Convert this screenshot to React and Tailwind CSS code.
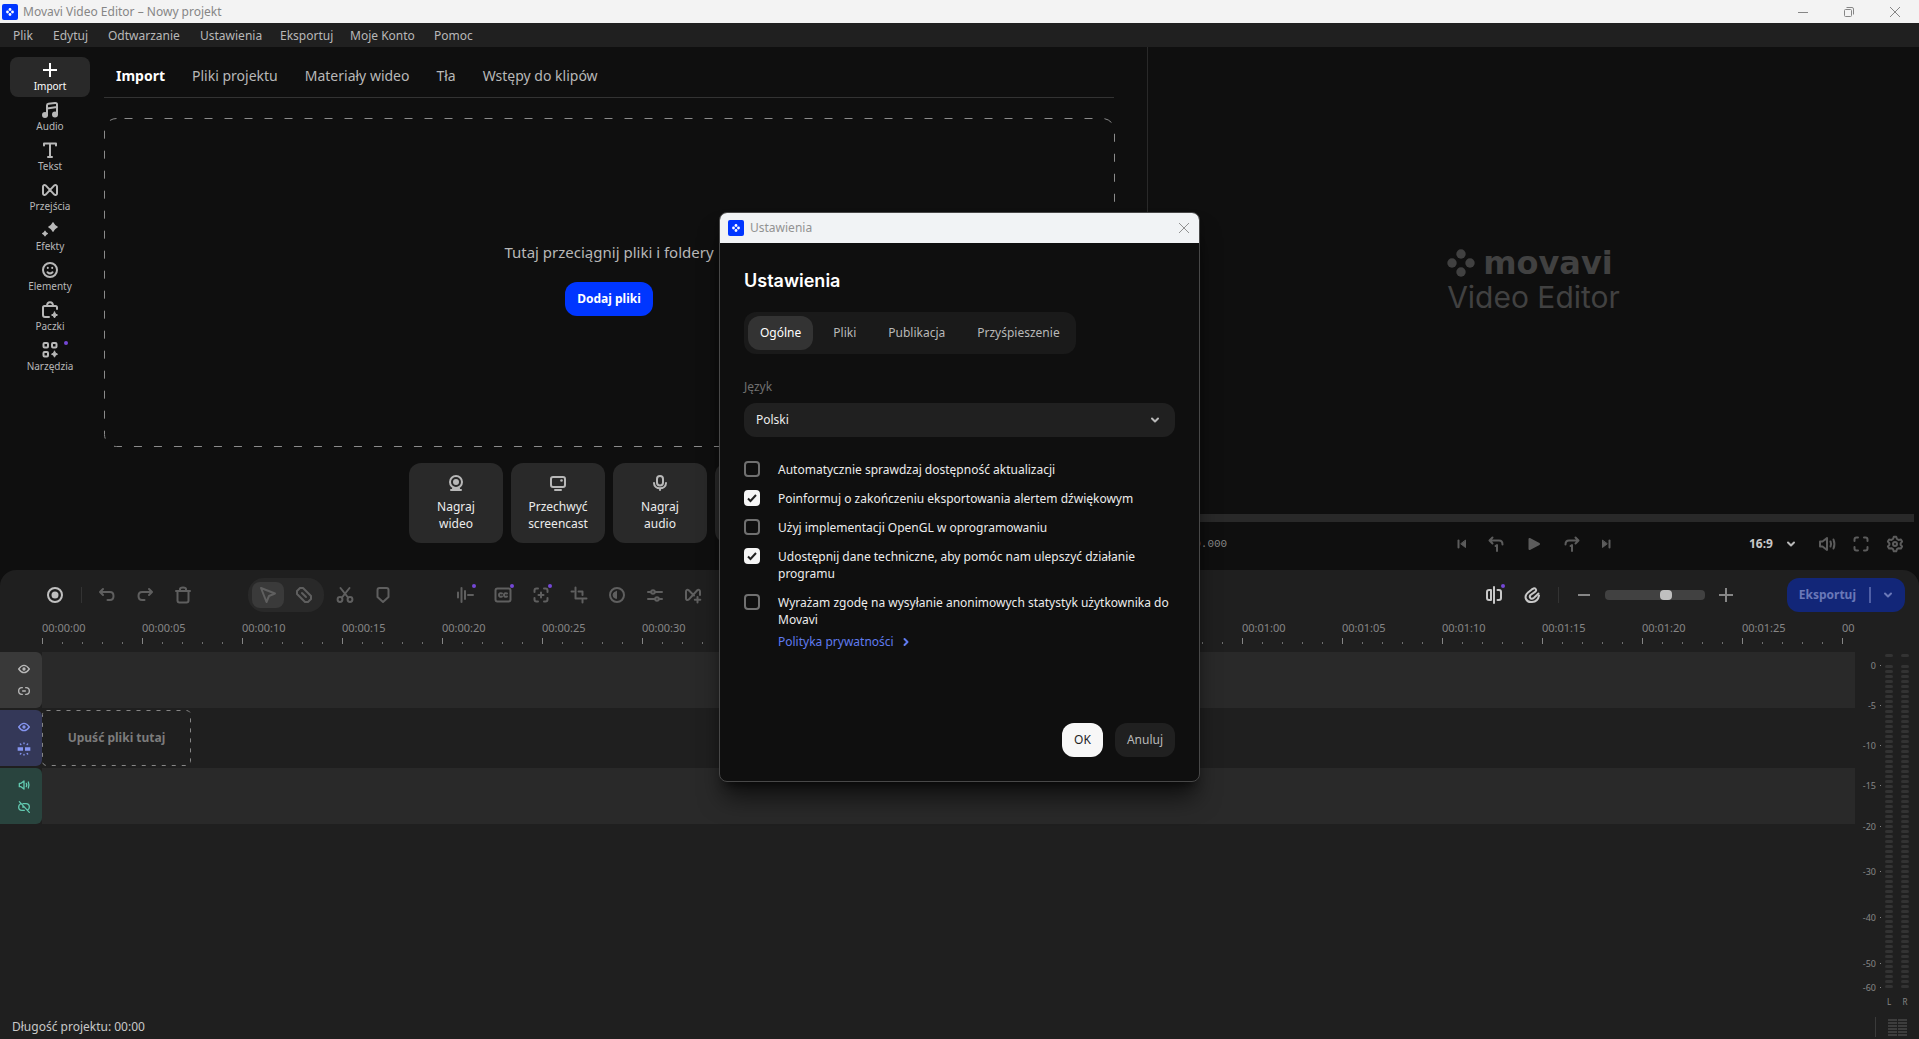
import { useState } from 'react';

const Icon = ({ children, className = 'size-6' }) => (
    <svg
        viewBox="0 0 24 24"
        fill="none"
        stroke="currentColor"
        strokeWidth="2"
        strokeLinecap="round"
        strokeLinejoin="round"
        aria-hidden="true"
        className={`shrink-0 ${className}`}
    >
        {children}
    </svg>
);

const icons = {
    plus: <path d="M12 5v14M5 12h14" strokeLinecap="butt" />,
    audio: (
        <>
            <path d="M9 17V7.5Q9 6 10.500 5.800L17 5q2-.2 2 1.600V16M9 10.500l10-1.600" />
            <circle cx="7" cy="17" r="2" fill="currentColor" />
            <circle cx="17" cy="16.500" r="2" fill="currentColor" />
        </>
    ),
    text: <path d="M6 7.500V5.500h12v2M12 6v13M10 19h4" />,
    transition: <path d="M5 8.500v7c0 1.400 1.600 2 2.700 1.100L16.300 7.400C17.400 6.500 19 7.100 19 8.500v7c0 1.400-1.600 2-2.700 1.100L7.700 7.400C6.600 6.500 5 7.100 5 8.500z" />,
    effects: (
        <g fill="currentColor" stroke="none">
            <path d="M14.500 4.500q.5-1 1 0 1.300 2.700 4 4 1 .5 0 1-2.700 1.300-4 4-.5 1-1 0-1.300-2.700-4-4-1-.5 0-1 2.700-1.300 4-4z" />
            <path d="M6.600 12.800q.4-.8.8 0 .7 1.600 2.300 2.300.8.4 0 .8-1.600.7-2.300 2.300-.4.8-.8 0-.7-1.600-2.300-2.300-.8-.4 0-.8 1.600-.7 2.300-2.300z" />
        </g>
    ),
    smile: (
        <>
            <circle cx="12" cy="12" r="7" />
            <path d="M9.500 14.200q2.500 2.400 5 0M9.800 9.800v.1M14.200 9.800v.1" />
        </>
    ),
    bag: (
        <>
            <path d="M9 8c0-5 6-5 6 0M19 11V9.500Q19 8 17.500 8h-11Q5 8 5 9.500V17q0 2 2 2h4" />
            <path d="M16.500 14q.5 2.500 3 3-2.500.5-3 3-.5-2.500-3-3 2.500-.5 3-3z" fill="currentColor" strokeWidth="1" />
        </>
    ),
    tools: (
        <>
            <rect x="5.500" y="5" width="4.500" height="4.500" rx="1" />
            <rect x="14" y="5" width="4.500" height="4.500" rx="1" />
            <rect x="5.500" y="14" width="4.500" height="4.500" rx="1" />
            <path d="M16.500 13.200q.5 2.500 3 3-2.500.5-3 3-.5-2.500-3-3 2.500-.5 3-3z" fill="currentColor" strokeWidth="1" />
        </>
    ),
    webcam: (
        <>
            <circle cx="12" cy="11" r="6" />
            <circle cx="12" cy="11" r="3" fill="currentColor" stroke="none" />
            <path d="M7 19h10M9 17.500h6" />
        </>
    ),
    screen: (
        <>
            <rect x="5" y="6" width="14" height="10" rx="2" />
            <path d="M9 19h6" />
            <circle cx="15.500" cy="9.500" r="1.300" fill="currentColor" stroke="none" />
        </>
    ),
    mic: (
        <>
            <rect x="9" y="5" width="6" height="9.500" rx="3" />
            <path d="M6 12c0 7 12 7 12 0M12 17.500V19" />
        </>
    ),
    record: (
        <>
            <circle cx="12" cy="12" r="7" />
            <circle cx="12" cy="12" r="3.500" fill="currentColor" stroke="none" />
        </>
    ),
    undo: <path d="M8 6 5 9l3 3M5.500 9H15q3.500 0 3.500 4T15 17h-2.500" />,
    redo: <path d="m16 6 3 3-3 3M18.500 9H9q-3.500 0-3.500 4T9 17h2.500" />,
    trash: <path d="M5 8h14M9 7.500V6q0-1.500 3-1.500T15 6v1.500M6.500 8v9.500q0 2 2 2h7q2 0 2-2V8" />,
    cursor: <path d="m5 5 14 5.500-6 2.500-2.500 6z" />,
    blade: (
        <>
            <path d="M8 5h3l8 8v3l-3 3h-3l-8-8V8z" />
            <path d="m10 10 4 4" />
        </>
    ),
    scissors: (
        <>
            <circle cx="7" cy="16.500" r="2.400" />
            <circle cx="17" cy="16.500" r="2.400" />
            <path d="m7.500 5 7.500 9.500M16.500 5 9 14.500" />
        </>
    ),
    shield: <path d="M8.500 5h7q2 0 2 2v7L12 19l-5.500-5V7q0-2 2-2z" />,
    split: <path d="M5 9.500v5M8.500 5v14M12 8v8M15 12h5" />,
    cc: (
        <>
            <rect x="4.500" y="5.500" width="15" height="13" rx="2" />
            <path d="M11 10.500q-3-.8-3 1.500t3 1.500M16 10.500q-3-.8-3 1.500t3 1.500" />
        </>
    ),
    focus: (
        <>
            <path d="M5.500 9V7.500q0-2 2-2H9M15 5.500h1.500q2 0 2 2V9M18.500 15v1.500q0 2-2 2H15M9 18.500H7.500q-2 0-2-2V15" />
            <path d="M12 9.500v5M9.500 12h5" />
        </>
    ),
    crop: <path d="M8.500 4.500v11h11M4.500 8.500h2M11.500 8.500h4V12M15.500 17v2.500" />,
    contrast: (
        <>
            <circle cx="12" cy="12" r="7" />
            <path d="M11.500 8.500v7q-3.500-.5-3.500-3.500t3.500-3.500z" fill="currentColor" strokeWidth="1" />
        </>
    ),
    sliders: (
        <>
            <circle cx="10" cy="9" r="1.800" />
            <circle cx="14" cy="16" r="1.800" />
            <path d="M5 9h3M12 9h7M5 16h7M16 16h3" />
        </>
    ),
    transitionAdd: (
        <>
            <path d="M19 12V8.500c0-1.600-1.600-2.200-2.700-1.200L7.700 16.600C6.600 17.600 5 17 5 15.500v-7C5 6.900 6.600 6.300 7.700 7.300L13 12.500" />
            <path d="M16.500 14v5.500M13.800 16.800h5.500" />
        </>
    ),
    magnetSplit: <path d="M12 4v16M9 7H7Q5 7 5 9v6q0 2 2 2h2zM15.500 7H17q2 0 2 2v6q0 2-2 2h-1.500" />,
    magnet: (
        <>
            <path d="M12.500 6 8 9.500Q4.500 12.500 6 16t6 3q6-.5 7-6.500" />
            <path d="M12.500 6q2-1.500 3.200 0t-.7 2.800L10.500 12q-1.500 1.800 0 3.200t3.500-.4L18.500 10.500" />
        </>
    ),
    minus: <path d="M6 12h12" strokeLinecap="butt" />,
    chevron: <path d="m9 10.500 3 3 3-3" />,
    chevronRight: <path d="m10.500 9 3 3-3 3" />,
    skipBack: (
        <>
            <path d="M8.500 8.500v7" />
            <path d="M15.500 8.500v7L11 12z" fill="currentColor" strokeWidth="1" />
        </>
    ),
    skipForward: (
        <>
            <path d="M15.500 8.500v7" />
            <path d="M8.500 8.500v7L13 12z" fill="currentColor" strokeWidth="1" />
        </>
    ),
    back1: (
        <>
            <path d="M8.500 5.500 5.500 8.500l3 3M6 8.500h9q3.500 0 3.500 4" />
            <path d="m11.500 14 1.500-1v6" />
        </>
    ),
    forward1: (
        <>
            <path d="m15.500 5.500 3 3-3 3M18 8.500H9q-3.500 0-3.500 4" />
            <path d="m10.500 14 1.500-1v6" />
        </>
    ),
    play: <path d="M7.500 7v10L17 12z" fill="currentColor" />,
    speaker: <path d="M5 9.500v5h2.500L12 18V6L7.500 9.500zM15.500 9.500q1.200 2.500 0 5M18.500 7.500q1.800 4.500 0 9" />,
    fullscreen: <path d="M5.500 9V7.500q0-2 2-2H9M15 5.500h1.500q2 0 2 2V9M18.500 15v1.500q0 2-2 2H15M9 18.500H7.500q-2 0-2-2V15" />,
    gear: (
        <>
            <path d="M10.800 4.800h2.400l.8 2.200 1.600.9 2.300-.4 1.200 2.100-1.500 1.800v1.400l1.500 1.700-1.200 2.100-2.300-.4-1.600.9-.8 2.200h-2.400l-.8-2.200-1.600-.9-2.300.4-1.200-2.100 1.500-1.700v-1.400L4.900 9.600l1.200-2.100 2.300.4L10 7z" />
            <circle cx="12" cy="12" r="2" />
        </>
    ),
    eye: (
        <>
            <path d="M4 12q8-11 16 0-8 11-16 0z" />
            <circle cx="12" cy="12" r="1.500" fill="currentColor" />
        </>
    ),
    link: <path d="M9.500 7H9q-5 0-5 5t5 5h.5M14.500 7h.5q5 0 5 5t-5 5h-.5M10 12h4" />,
    unlink: <path d="M10.500 7H15q5 0 5 5 0 3-2.500 4.500M12.500 17H9q-5 0-5-5 0-3 2.500-4.500M5 4l15 16M10 12h2" />,
    snap: (
        <>
            <path d="M2.500 12h8M13.500 12h8" strokeWidth="5" strokeLinecap="butt" />
            <path d="M12 3v1M12 20v1M6.500 4.500l.8.8M17.500 4.500l-.8.8M6.500 19.500l.8-.8M17.500 19.500l-.8-.8" />
        </>
    ),
};

const menu = [
    ['Plik', 'w-10'],
    ['Edytuj', 'w-[55px]'],
    ['Odtwarzanie', 'w-[92px]'],
    ['Ustawienia', 'w-20'],
    ['Eksportuj', 'w-[70px]'],
    ['Moje Konto', 'w-[84px]'],
    ['Pomoc', 'w-14'],
];

const sidebar = [
    ['Import', 'plus'],
    ['Audio', 'audio'],
    ['Tekst', 'text'],
    ['Przejścia', 'transition'],
    ['Efekty', 'effects'],
    ['Elementy', 'smile'],
    ['Paczki', 'bag'],
    ['Narzędzia', 'tools'],
];

const importTabs = ['Import', 'Pliki projektu', 'Materiały wideo', 'Tła', 'Wstępy do klipów'];

const captureCards = [
    ['Nagraj wideo', 'webcam'],
    ['Przechwyć screencast', 'screen'],
    ['Nagraj audio', 'mic'],
    ['Wideo z telefonu', 'screen'],
];

const editTools = [
    ['Podziel dźwięk', 'split', true],
    ['Napisy', 'cc', true],
    ['Śledzenie', 'focus', true],
    ['Przytnij', 'crop'],
    ['Kolor', 'contrast'],
    ['Właściwości', 'sliders'],
    ['Dodaj przejście', 'transitionAdd'],
];

const meterLabels = [
    ['0', 'h-10'],
    ['-5', 'h-10'],
    ['-10', 'h-10'],
    ['-15', 'h-[41px]'],
    ['-20', 'h-[45px]'],
    ['-30', 'h-[46px]'],
    ['-40', 'h-[46px]'],
    ['-50', 'h-6'],
    ['-60', 'h-3'],
];

const settings = [
    ['Automatycznie sprawdzaj dostępność aktualizacji', false],
    ['Poinformuj o zakończeniu eksportowania alertem dźwiękowym', true],
    ['Użyj implementacji OpenGL w oprogramowaniu', false],
    ['Udostępnij dane techniczne, aby pomóc nam ulepszyć działanie programu', true],
    ['Wyrażam zgodę na wysyłanie anonimowych statystyk użytkownika do Movavi', false],
];

const timeLabel = (seconds) => {
    const pad = (n) => String(n).padStart(2, '0');
    return `00:${pad(Math.floor(seconds / 60))}:${pad(seconds % 60)}`;
};

const AppLogo = () => (
    <svg viewBox="0 0 16 16" className="size-4 shrink-0" aria-hidden="true">
        <rect width="16" height="16" rx="2" fill="#0036ff" />
        <g fill="#fff">
            <circle cx="8" cy="5.500" r="1.400" />
            <circle cx="8" cy="10.500" r="1.400" />
            <circle cx="5.500" cy="8" r="1.400" />
            <circle cx="10.500" cy="8" r="1.400" />
        </g>
    </svg>
);

const Dot = ({ className }) => <span className={`absolute size-1 rounded-full bg-[#7447d6] ${className}`} />;

const IconButton = ({ label, icon, dot, className = 'size-6' }) => (
    <button type="button" aria-label={label} className={`relative flex shrink-0 items-center justify-center ${className}`}>
        <Icon>{icons[icon]}</Icon>
        {dot && <Dot className="top-px right-px" />}
    </button>
);

const TitleBar = () => (
    <header className="flex h-[23px] items-center bg-[#f3f3f3] pl-[2px] text-[#868686]">
        <AppLogo />
        <h1 className="ml-[5px] text-xs">Movavi Video Editor – Nowy projekt</h1>
        <div className="mr-px ml-auto flex">
            <button type="button" aria-label="Minimalizuj" className="flex w-[46px] justify-center">
                <svg viewBox="0 0 10 10" className="size-[10px]" stroke="currentColor"><path d="M0 5.500h10" /></svg>
            </button>
            <button type="button" aria-label="Przywróć" className="flex w-[46px] justify-center">
                <svg viewBox="0 0 10 10" className="size-[10px]" fill="none" stroke="currentColor">
                    <rect x=".5" y="2.500" width="7" height="7" rx="1" />
                    <path d="M2.500.5H8q1.500 0 1.500 1.500v5.500" />
                </svg>
            </button>
            <button type="button" aria-label="Zamknij" className="flex w-[46px] justify-center">
                <svg viewBox="0 0 10 10" className="size-[10px]" stroke="currentColor"><path d="m0 0 10 10M10 0 0 10" /></svg>
            </button>
        </div>
    </header>
);

const MenuBar = () => (
    <nav className="flex h-6 items-center bg-[#202020] pt-px pl-[13px] text-xs text-[#b8b8b8]">
        {menu.map(([label, width]) => (
            <button key={label} type="button" className={`text-left whitespace-nowrap ${width}`}>{label}</button>
        ))}
    </nav>
);

const Sidebar = () => (
    <nav className="mt-[10px] mr-[14px] ml-[10px] flex w-20 shrink-0 flex-col">
        {sidebar.map(([label, icon], i) => (
            <button
                key={label}
                type="button"
                className={`relative flex h-10 flex-col items-center rounded-lg text-[10px] leading-4 ${i === 0 ? 'bg-[#292929] text-white' : 'text-[#b8b8b8]'}`}
            >
                <Icon className="mt-px size-6">{icons[icon]}</Icon>
                <span className="-mt-1">{label}</span>
                {icon === 'tools' && <Dot className="top-1 right-[22px]" />}
            </button>
        ))}
    </nav>
);

const ImportPanel = () => (
    <section className="flex min-w-0 border-r border-[#292929]">
        <Sidebar />
        <div className="mr-[33px] flex min-w-0 flex-1 flex-col">
            <div className="flex h-[51px] items-center gap-[27px] border-b border-[#333] pt-[7px] pl-3 text-sm text-[#b8b8b8]">
                {importTabs.map((tab, i) => (
                    <button key={tab} type="button" className={i === 0 ? 'font-bold text-white' : ''}>{tab}</button>
                ))}
            </div>
            <div className="relative mt-5 flex h-[328px] flex-col items-center justify-center pb-[6px]">
                <svg className="absolute inset-0 size-full" overflow="visible" aria-hidden="true">
                    <rect x=".5" y=".5" width="100%" height="100%" rx="12" fill="none" stroke="#8a8a8a" strokeDasharray="8 12" strokeDashoffset="-8" />
                </svg>
                <p className="text-[15px] leading-5 text-[#b8b8b8]">Tutaj przeciągnij pliki i foldery</p>
                <button type="button" className="mt-5 h-[34px] rounded-xl bg-[#0036ff] px-3 text-xs font-bold text-white">
                    Dodaj pliki
                </button>
            </div>
            <div className="mt-[17px] mb-[27px] flex justify-center gap-2">
                {captureCards.map(([label, icon]) => (
                    <button
                        key={label}
                        type="button"
                        className="flex h-20 w-[94px] flex-col items-center rounded-xl bg-[#292929] px-3 pt-2 text-xs leading-[17px] text-[#ececec]"
                    >
                        <Icon className="mb-[3px] size-6 text-[#b8b8b8]">{icons[icon]}</Icon>
                        {label}
                    </button>
                ))}
            </div>
        </div>
    </section>
);

const Preview = () => (
    <section className="flex min-w-0 flex-col">
        <div className="flex flex-1 items-center justify-center text-[#414141]">
            <div>
                <div className="flex items-center gap-2">
                    <svg viewBox="0 0 28 28" className="size-7" fill="currentColor" aria-hidden="true">
                        <circle cx="14" cy="5" r="4.700" />
                        <circle cx="14" cy="23" r="4.700" />
                        <circle cx="5" cy="14" r="4.700" />
                        <circle cx="23" cy="14" r="4.700" />
                    </svg>
                    <span className="font-['DejaVu_Sans'] text-[32px] leading-7 font-bold">movavi</span>
                </div>
                <p className="mt-1 font-['Inter'] text-[30px] leading-8">Video Editor</p>
            </div>
        </div>
        <div className="mr-[5px] ml-[5px] h-2 bg-[#292929]" />
        <div className="mb-1 grid h-11 grid-cols-[1fr_auto_1fr] items-center text-[#5c5c5c]">
            <span className="font-['Liberation_Mono'] text-[11px] text-[#868686]">00:00:00.000</span>
            <div className="flex items-center gap-[10px]">
                <IconButton label="Początek" icon="skipBack" />
                <IconButton label="Poprzednia klatka" icon="back1" />
                <IconButton label="Odtwórz" icon="play" className="h-6 w-8" />
                <IconButton label="Następna klatka" icon="forward1" />
                <IconButton label="Koniec" icon="skipForward" />
            </div>
            <div className="flex items-center justify-end gap-[10px] pr-3">
                <div className="relative mr-[2px] flex items-center">
                    <select aria-label="Proporcje" className="w-[54px] appearance-none bg-transparent text-xs font-bold text-[#c8c8c8]">
                        <option>16:9</option>
                    </select>
                    <Icon className="pointer-events-none absolute right-0 size-6 text-[#b8b8b8]">{icons.chevron}</Icon>
                </div>
                <IconButton label="Głośność" icon="speaker" />
                <IconButton label="Pełny ekran" icon="fullscreen" />
                <IconButton label="Ustawienia podglądu" icon="gear" />
            </div>
        </div>
    </section>
);

const Toolbar = () => (
    <div className="flex h-[50px] items-center pr-[14px] pl-[43px] text-[#5f5f5f]">
        <div className="flex items-center gap-[14px]">
            <span className="flex text-[#c0c0c0]"><IconButton label="Nagraj" icon="record" /></span>
            <span className="-mr-px h-4 w-px bg-[#333]" />
            <IconButton label="Cofnij" icon="undo" />
            <IconButton label="Ponów" icon="redo" />
            <IconButton label="Usuń" icon="trash" />
        </div>
        <div className="ml-[53px] flex gap-1 rounded-2xl bg-[#292929] p-1">
            <IconButton label="Zaznacz" icon="cursor" className="h-[26px] w-8 rounded-lg bg-[#3a3a3a]" />
            <IconButton label="Ostrze" icon="blade" className="h-[26px] w-8" />
        </div>
        <div className="ml-[9px] flex gap-[14px]">
            <IconButton label="Wytnij" icon="scissors" />
            <IconButton label="Znacznik" icon="shield" />
        </div>
        <div className="ml-[58px] flex gap-[14px]">
            {editTools.map(([label, icon, dot]) => (
                <IconButton key={label} label={label} icon={icon} dot={dot} />
            ))}
        </div>
        <div className="ml-auto flex items-center gap-[14px] text-[#c8c8c8]">
            <IconButton label="Przyciąganie" icon="magnetSplit" dot />
            <IconButton label="Magnes" icon="magnet" />
            <span className="h-4 w-px bg-[#333]" />
        </div>
        <div className="ml-[13px] flex items-center gap-[9px] text-[#868686]">
            <IconButton label="Pomniejsz" icon="minus" />
            <input
                type="range"
                aria-label="Powiększenie osi czasu"
                defaultValue="63"
                className="h-[10px] w-[100px] appearance-none rounded-sm bg-[#414141] [&::-webkit-slider-thumb]:h-[10px] [&::-webkit-slider-thumb]:w-3 [&::-webkit-slider-thumb]:appearance-none [&::-webkit-slider-thumb]:rounded-sm [&::-webkit-slider-thumb]:bg-[#c0c0c0]"
            />
            <IconButton label="Powiększ" icon="plus" />
        </div>
        <button type="button" className="ml-[49px] flex h-[34px] items-center rounded-xl bg-[#122678] pr-[5px] pl-3 text-xs font-bold text-[#6a78b8]">
            Eksportuj
            <span className="mr-[5px] ml-[13px] h-4 w-[2px] bg-[#4f5fa6]" />
            <Icon>{icons.chevron}</Icon>
        </button>
    </div>
);

const Ruler = () => (
    <div className="ml-[42px] flex h-8 overflow-hidden text-[11px] leading-4 text-[#868686]">
        {Array.from({ length: 19 }, (_, i) => (
            <div key={i} className="w-[100px] shrink-0">
                <span className="block">{timeLabel(i * 5)}</span>
                <div className="mt-[2px] flex h-[6px] items-end">
                    <span className="h-full w-5 border-l border-[#868686]" />
                    {[1, 2, 3, 4].map((n) => (
                        <span key={n} className="h-[2px] w-5 border-l border-[#6f6f6f]" />
                    ))}
                </div>
            </div>
        ))}
    </div>
);

const Track = ({ head, body, top, bottom, children }) => (
    <div className="flex h-14">
        <div className={`flex w-[42px] shrink-0 flex-col items-center justify-center gap-1 rounded-r-md pl-[6px] ${head}`}>
            {[top, bottom].map((icon) => (
                <button key={icon} type="button" aria-label={icon} className="flex h-[18px] items-center">
                    <Icon className="size-4">{icons[icon]}</Icon>
                </button>
            ))}
        </div>
        <div className={`flex-1 ${body}`}>{children}</div>
    </div>
);

const Meter = () => (
    <aside className="flex w-16 shrink-0 justify-end self-start pt-[34px] pr-[10px]">
        <div className="mt-[6px] mr-[9px] flex flex-col text-right text-[9px] leading-3 text-[#868686]">
            {meterLabels.map(([label, height]) => (
                <span key={label} className={`flex items-start justify-end gap-1 ${height}`}>
                    {label}
                    <i className="mt-[5px] -mr-[5px] h-px w-px bg-[#868686]" />
                </span>
            ))}
        </div>
        {['L', 'R'].map((channel) => (
            <div key={channel} className="flex w-2 flex-col gap-[2px] not-last:mr-2">
                <span className="mb-[6px] h-[3px] rounded-full bg-[#333]" />
                {Array.from({ length: 65 }, (_, i) => (
                    <span key={i} className="h-[3px] rounded-full bg-[#333]" />
                ))}
                <span className="mt-[6px] text-center text-[8px] leading-3 text-[#868686]">{channel}</span>
            </div>
        ))}
    </aside>
);

const Timeline = () => (
    <section className="flex flex-1 flex-col rounded-t-2xl bg-[#1f1f1f]">
        <Toolbar />
        <div className="flex flex-1">
            <div className="min-w-0 flex-1">
                <Ruler />
                <div className="flex flex-col gap-[2px]">
                    <Track head="bg-[#393939] text-[#b8b8b8]" body="bg-[#292929]" top="eye" bottom="link" />
                    <Track head="bg-[#343858] text-[#8595f0]" body="" top="eye" bottom="snap">
                        <div className="relative flex h-full w-[149px] items-center justify-center">
                            <svg className="absolute inset-0 size-full" aria-hidden="true">
                                <rect x=".5" y=".5" width="148" height="55" rx="4" fill="none" stroke="#868686" strokeDasharray="4 6" />
                            </svg>
                            <span className="text-xs font-bold text-[#7c7c7c]">Upuść pliki tutaj</span>
                        </div>
                    </Track>
                    <Track head="bg-[#29443e] text-[#62c9b0]" body="bg-[#292929]" top="speaker" bottom="unlink" />
                </div>
            </div>
            <Meter />
        </div>
        <footer className="flex h-6 items-center px-3 text-xs text-[#c8c8c8]">
            Długość projektu: 00:00
            <button type="button" aria-label="Miernik dźwięku" className="ml-auto flex h-5 items-center border-l border-[#3a3a3a] pl-3 text-[#3d3d3d]">
                <svg viewBox="0 0 19 17" className="h-[17px] w-[19px]" stroke="currentColor" strokeWidth="2" aria-hidden="true">
                    <path d="M0 1h9M10 1h9M0 4h9M10 4h9M0 7h9M10 7h9M0 10h9M10 10h9M0 13h9M10 13h9M0 16h9M10 16h9" />
                </svg>
            </button>
        </footer>
    </section>
);

const SettingsDialog = ({ onClose }) => {
    const [tab, setTab] = useState('Ogólne');

    return (
        <div className="pointer-events-none absolute inset-0 flex items-start justify-center pt-[212px]">
            <div
                role="dialog"
                aria-labelledby="settings-title"
                className="pointer-events-auto flex min-h-[570px] w-[481px] flex-col overflow-hidden rounded-lg border border-[#484848] bg-[#0f0f0f] text-xs text-[#ececec] shadow-xl shadow-black/60"
            >
                <div className="flex h-[30px] shrink-0 items-center bg-[#f1f3f5] pr-[10px] pl-2 text-[#929292]">
                    <AppLogo />
                    <span className="ml-[6px]">Ustawienia</span>
                    <button type="button" aria-label="Zamknij" onClick={onClose} className="ml-auto">
                        <svg viewBox="0 0 10 10" className="size-[10px]" stroke="currentColor"><path d="m0 0 10 10M10 0 0 10" /></svg>
                    </button>
                </div>
                <div className="flex flex-1 flex-col p-6">
                    <h2 id="settings-title" className="mb-[17px] font-['Inter'] text-lg leading-7 font-semibold text-white">Ustawienia</h2>
                    <div role="tablist" className="flex gap-2 self-start rounded-xl bg-[#1a1a1a] p-1">
                        {['Ogólne', 'Pliki', 'Publikacja', 'Przyśpieszenie'].map((name) => (
                            <button
                                key={name}
                                type="button"
                                role="tab"
                                aria-selected={tab === name}
                                onClick={() => setTab(name)}
                                className={`h-[34px] rounded-xl px-3 ${tab === name ? 'bg-[#333] text-white' : 'text-[#b8b8b8]'}`}
                            >
                                {name}
                            </button>
                        ))}
                    </div>
                    <label htmlFor="language" className="mt-6 mb-[7px] leading-[18px] text-[#707070]">Język</label>
                    <div className="relative flex items-center">
                        <select id="language" className="h-[34px] w-full appearance-none rounded-xl bg-[#202020] px-3">
                            <option>Polski</option>
                        </select>
                        <Icon className="pointer-events-none absolute right-2 size-6 text-[#b8b8b8]">{icons.chevron}</Icon>
                    </div>
                    <div className="mt-6 flex flex-col gap-3 leading-[17px]">
                        {settings.map(([label, checked]) => (
                            <label key={label} className="flex items-start gap-[18px]">
                                <span className="relative flex size-4 shrink-0">
                                    <input
                                        type="checkbox"
                                        defaultChecked={checked}
                                        className="peer size-4 appearance-none rounded-sm border-2 border-[#707070] checked:border-[#f5f5f5] checked:bg-[#f5f5f5]"
                                    />
                                    <svg viewBox="0 0 16 16" className="pointer-events-none absolute inset-0 hidden size-4 peer-checked:block" fill="none" stroke="#1f1f1f" strokeWidth="2">
                                        <path d="m4 8.500 2.500 2.500L12 5" />
                                    </svg>
                                </span>
                                {label}
                            </label>
                        ))}
                    </div>
                    <a href="#privacy" className="mt-[5px] ml-[34px] flex items-center self-start leading-[17px] text-[#5f7bf0]">
                        Polityka prywatności
                        <Icon className="-my-1 size-6">{icons.chevronRight}</Icon>
                    </a>
                    <div className="mt-auto flex justify-end gap-3">
                        <button type="button" onClick={onClose} className="h-[34px] rounded-xl bg-[#f7f7f7] px-3 text-[#1f1f1f]">OK</button>
                        <button type="button" onClick={onClose} className="h-[34px] rounded-xl bg-[#202020] px-3 text-[#b8b8b8]">Anuluj</button>
                    </div>
                </div>
            </div>
        </div>
    );
};

const App = () => {
    const [settingsOpen, setSettingsOpen] = useState(true);

    return (
        <div className="relative flex min-h-screen flex-col bg-[#0f0f0f] font-['Noto_Sans',sans-serif]">
            <TitleBar />
            <MenuBar />
            <main className="flex flex-1 flex-col">
                <div className="grid grid-cols-[1148fr_771fr]">
                    <ImportPanel />
                    <Preview />
                </div>
                <Timeline />
            </main>
            {settingsOpen && <SettingsDialog onClose={() => setSettingsOpen(false)} />}
        </div>
    );
};

export default App;
